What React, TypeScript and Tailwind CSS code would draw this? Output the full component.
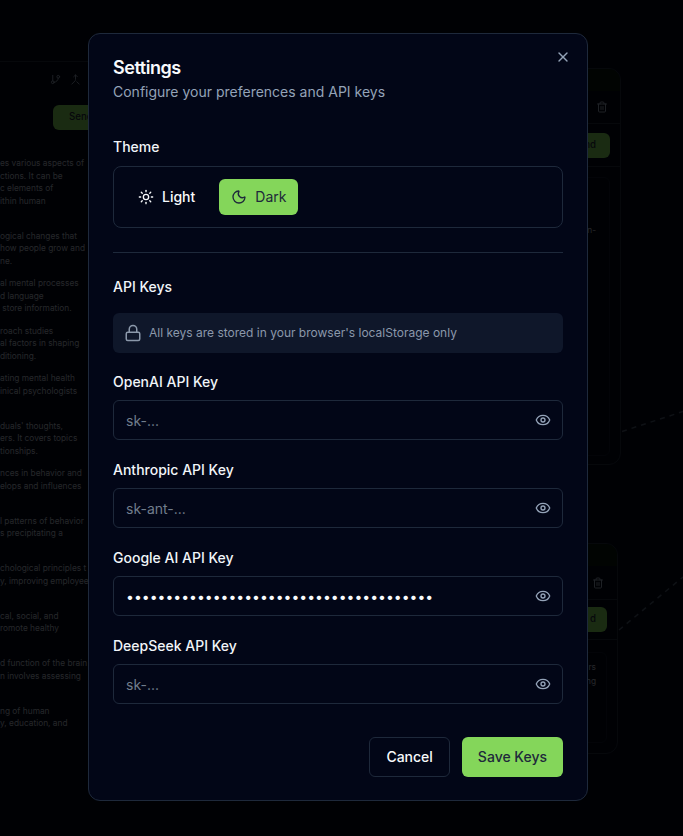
import { GitBranch, Lock, Merge, Moon, Sun, Trash2, X, Eye } from 'lucide-react';

// visible part of the node text behind the dialog, blank strings are lines hidden off-screen
const PARAGRAPHS = [
  ['es various aspects of', 'ctions. It can be', 'c elements of', 'ithin human', ''],
  ['ogical changes that', 'how people grow and', 'ne.'],
  ['al mental processes', 'd language', ' store information.'],
  ['roach studies', 'al factors in shaping', 'ditioning.'],
  ['ating mental health', 'inical psychologists', ''],
  ['duals\' thoughts,', 'ers. It covers topics', 'tionships.'],
  ['nces in behavior and', 'elops and influences', ''],
  ['l patterns of behavior', 's precipitating a', ''],
  ['chological principles t', 'y, improving employee', ''],
  ['cal, social, and', 'romote healthy', ''],
  ['d function of the brain', 'n involves assessing', ''],
  ['ng of human', 'y, education, and', ''],
];

const KEYS = [
  { label: 'OpenAI API Key', placeholder: 'sk-...', value: '' },
  { label: 'Anthropic API Key', placeholder: 'sk-ant-...', value: '' },
  { label: 'Google AI API Key', placeholder: 'AIza...', value: 'AIzaSyD4x7Kq2mWv9TnB3pLc8RfH1sJgY6uEo0Z' },
  { label: 'DeepSeek API Key', placeholder: 'sk-...', value: '' },
];

function Canvas() {
  return (
    <div className="absolute inset-0 bg-[#020617] bg-[radial-gradient(#2b3a50_0.7px,transparent_0.7px)] bg-[size:10px_10px] bg-[position:5px_1px]">
      {/* left node, mostly behind the dialog */}
      <div className="absolute left-[-120px] top-[61px] w-[280px] h-[735px] rounded-t-xl border border-b-0 border-[#1e293b] bg-[#020617]">
        <div className="flex justify-end gap-[9px] h-[33px] items-center pr-[78px] mt-[1px] text-[#94a3b8]">
          <GitBranch size={11} />
          <Merge size={11} />
        </div>
        <div className="flex h-[45px] mt-[8px] pl-[172px]">
          <div className="w-[70px] h-[25px] mt-[1px] rounded-md bg-[#84d65a] text-[#1e293b] text-[9.7px] flex items-center pl-[16px] font-medium">Send</div>
        </div>
      </div>
      <div className="absolute left-0 top-[157px] flex flex-col gap-[10px] font-['Inter',sans-serif] text-[8.33px] leading-[12.5px] text-[#b6bfcc]">
        {PARAGRAPHS.map((lines, i) => (
          <div key={i}>
            {lines.map((line, j) => (
              <div key={j} className="whitespace-pre h-[12.5px]">{line}</div>
            ))}
          </div>
        ))}
      </div>

      {/* right node 1 */}
      <div className="absolute left-[520px] top-[68px] w-[101px] h-[397px] rounded-xl border border-[#1e293b] bg-[#020617] overflow-hidden">
        <div className="h-[22px] bg-[#06180c]" />
        <div className="h-[33px] border-b border-[#1e293b] flex items-center justify-end pr-[12px] text-[#94a3b8]">
          <Trash2 size={12} />
        </div>
        <div className="h-[43px] border-b border-[#1e293b] pt-[9px] pr-[10px]">
          <div className="h-[25px] rounded-md bg-[#84d65a] text-[#1e293b] text-[9.7px] font-medium flex items-center justify-end pr-[14px]">nd</div>
        </div>
        <div className="mt-[10px] mr-[10px] h-[279px] rounded-md border border-[#0f172a] text-[8.33px] text-[#b6bfcc] pt-[46px] text-right pr-[13px]">n-</div>
      </div>

      {/* right node 2 */}
      <div className="absolute left-[520px] top-[543px] w-[98px] h-[211px] rounded-xl border border-[#1e293b] bg-[#020617] overflow-hidden">
        <div className="h-[22px] bg-[#06180c]" />
        <div className="h-[34px] border-b border-[#1e293b] flex items-center justify-end pr-[13px] text-[#94a3b8]">
          <Trash2 size={12} />
        </div>
        <div className="h-[40px] border-b border-[#1e293b] pt-[7px] pr-[10px]">
          <div className="h-[25px] rounded-md bg-[#84d65a] text-[#1e293b] text-[9.7px] font-medium flex items-center justify-end pr-[11px]">d</div>
        </div>
        <div className="mt-[12px] mr-[10px] h-[91px] rounded-md border border-[#0f172a] text-[8.33px] leading-[14px] text-[#b6bfcc] pt-[7px] text-right pr-[10px]">
          <div>rs</div>
          <div>ng</div>
        </div>
      </div>

      {/* connections */}
      <svg className="absolute inset-0" width="683" height="836" fill="none">
        <path d="M622 431.5 L683 411.5" stroke="#475569" strokeWidth="1.5" strokeDasharray="5 5" />
        <path d="M619 630 L683 577" stroke="#475569" strokeWidth="1.5" strokeDasharray="5 5" />
      </svg>
    </div>
  );
}

function KeyField({ label, placeholder, value }: { label: string; placeholder: string; value: string }) {
  return (
    <div className="flex flex-col gap-2">
      <label className="text-sm leading-5 font-medium text-[#f1f5f9]">{label}</label>
      <div className="relative">
        <input
          type="password"
          defaultValue={value}
          placeholder={placeholder}
          className="w-full h-10 rounded-md border border-[#1e293b] bg-transparent pl-3 pr-10 text-sm text-[#f8fafc] placeholder:text-[#717d8c] outline-none"
        />
        <button className="absolute right-3 top-3 text-[#94a3b8]">
          <Eye size={16} />
        </button>
      </div>
    </div>
  );
}

export default function App() {
  return (
    <div className="relative h-screen w-full overflow-hidden bg-[#020617] font-['Inter',sans-serif]">
      <Canvas />
      <div className="absolute inset-0 bg-black/80 backdrop-blur-[0.5px] flex items-center justify-center pr-[7px] pb-[2px]">
        <div className="relative w-[500px] rounded-xl border border-[#1e293b] bg-[#020617] pt-6 px-6 pb-[23px] flex flex-col">
          <button className="absolute right-[16px] top-[15px] text-[#94a3b8]">
            <X size={16} />
          </button>

          <h2 className="text-lg leading-[22px] font-semibold tracking-tight text-[#f8fafc] mt-[-1px]">Settings</h2>
          <p className="text-sm leading-5 text-[#94a3b8] mt-[3px]">Configure your preferences and API keys</p>

          <h3 className="text-sm leading-5 font-medium text-[#f1f5f9] mt-[35px]">Theme</h3>
          <div className="mt-[9px] rounded-lg border border-[#1e293b] p-3 flex gap-3">
            <button className="h-9 px-3 rounded-md flex items-center gap-2 text-sm font-medium text-[#f8fafc]">
              <Sun size={16} />
              Light
            </button>
            <button className="h-9 px-3 rounded-md flex items-center gap-2 text-sm font-normal bg-[#84d65a] text-[#1e293b]">
              <Moon size={16} />
              Dark
            </button>
          </div>

          <div className="h-px bg-[#1e293b] mt-6" />

          <h3 className="text-sm leading-5 font-medium text-[#f1f5f9] mt-6">API Keys</h3>
          <div className="mt-4 h-10 rounded-md bg-[#0f172a] flex items-center gap-[7px] px-[11px] text-xs text-[#8b98aa]">
            <Lock size={18} className="shrink-0" />
            All keys are stored in your browser's localStorage only
          </div>

          <div className="mt-[19px] flex flex-col gap-5">
            {KEYS.map((k) => (
              <KeyField key={k.label} {...k} />
            ))}
          </div>

          <div className="mt-[33px] flex justify-end gap-3">
            <button className="h-10 px-4 rounded-md border border-[#1e293b] text-sm font-medium text-[#f8fafc]">Cancel</button>
            <button className="h-10 px-4 rounded-md bg-[#84d65a] text-sm font-medium text-[#1e293b]">Save Keys</button>
          </div>
        </div>
      </div>
    </div>
  );
}
